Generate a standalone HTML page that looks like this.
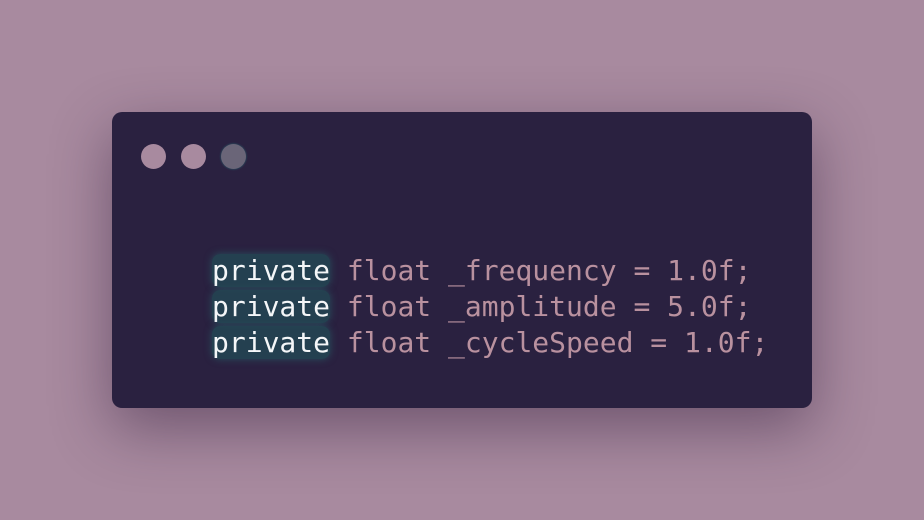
<html><head><style>
body{margin:0;width:924px;height:520px;background:#a88a9f;overflow:hidden}
.card{position:absolute;left:112px;top:112px;width:700px;height:296px;background:#2a2140;border-radius:10px;box-shadow:0 20px 60px rgba(40,20,50,.45)}
.d{position:absolute;top:144px;width:25px;height:25px;border-radius:50%;background:#a88a9f}
pre{position:absolute;left:212px;top:253px;margin:0;font-family:"DejaVu Sans Mono","Liberation Mono",monospace;font-size:28px;line-height:36px;color:#b9919f}
b{font-weight:normal;color:#f4f6f8;background:rgba(35,75,85,.75);border-radius:8px;box-shadow:0 0 8px rgba(40,90,100,.8)}
</style></head><body>
<div class="card"></div>
<div class="d" style="left:141px"></div>
<div class="d" style="left:181px"></div>
<div class="d" style="left:221px;background:#6a6578;box-shadow:0 0 2px #2b6670"></div>
<pre><b>private</b> float _frequency = 1.0f;
<b>private</b> float _amplitude = 5.0f;
<b>private</b> float _cycleSpeed = 1.0f;</pre>
</body></html>
